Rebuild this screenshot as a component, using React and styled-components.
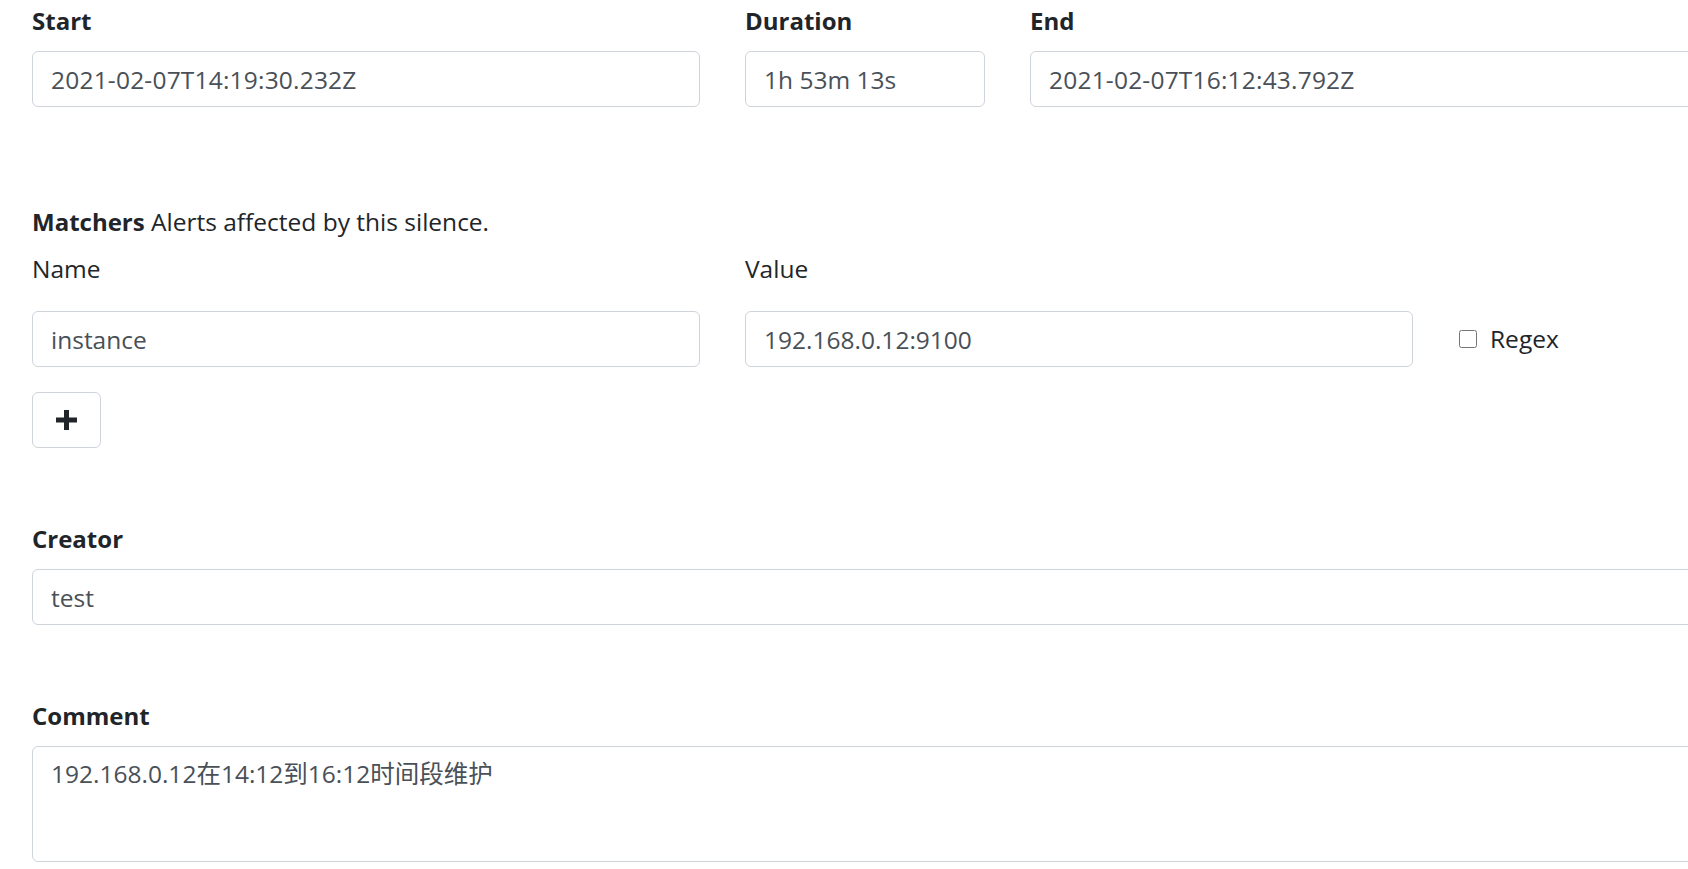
import styled, { createGlobalStyle } from 'styled-components';

const GlobalStyle = createGlobalStyle`
  html, body {
    margin: 0;
    padding: 0;
    background: #fff;
    overflow: hidden;
  }
  body {
    font-family: "Open Sans", "Noto Sans CJK SC", sans-serif;
    font-size: 24.5px;
    line-height: 1.5;
    color: #212529;
  }
`;

const Page = styled.div`
  padding: 3px 0 0 32px;
  width: 1666px;
`;

const Row = styled.div`
  display: grid;
  grid-template-columns: ${props => props.cols};
  column-gap: 45px;
  margin-top: ${props => props.top || 0}px;
`;

const Field = styled.div`
  display: flex;
  flex-direction: column;
  margin-top: ${props => props.top || 0}px;
`;

const Label = styled.label`
  display: block;
  line-height: 36px;
  font-size: ${props => (props.plain ? 24.5 : 24)}px;
  font-weight: ${props => (props.plain ? 400 : 700)};
  margin-bottom: ${props => props.gap || 12}px;
`;

const Hint = styled.div`
  line-height: 36px;
  margin-top: ${props => props.top || 0}px;

  strong {
    font-size: 24px;
    font-weight: 700;
  }
`;

const Input = styled.input`
  box-sizing: border-box;
  width: 100%;
  height: 56px;
  padding: 0 18px;
  border: 1px solid #ced4da;
  border-radius: 6px;
  font: inherit;
  letter-spacing: ${props => (props.wide ? '0.2px' : 'normal')};
  color: #495057;
  background: #fff;
  outline: none;
`;

const TextArea = styled.textarea`
  box-sizing: border-box;
  width: 100%;
  height: 116px;
  padding: 9px 18px;
  border: 1px solid #ced4da;
  border-radius: 6px;
  font: inherit;
  line-height: 36px;
  color: #495057;
  background: #fff;
  outline: none;
  resize: vertical;
`;

const CheckWrap = styled.label`
  display: flex;
  align-items: center;
  height: 56px;
  align-self: end;
  color: #212529;
`;

const Check = styled.input`
  width: 18px;
  height: 18px;
  margin: 0 13px 0 1px;
`;

const AddButton = styled.button`
  display: flex;
  align-items: center;
  justify-content: center;
  width: 69px;
  height: 56px;
  margin-top: 25px;
  padding: 0;
  border: 1px solid #ced4da;
  border-radius: 6px;
  background: #fff;
  cursor: pointer;
`;

const PlusIcon = () => (
  <svg width="21" height="20" viewBox="0 0 21 20">
    <path d="M8 0h5v7.5h8v5h-8V20H8v-7.5H0v-5h8z" fill="#212529" />
  </svg>
);

export default function App() {
  return (
    <>
      <GlobalStyle />
      <Page>
        <Row cols="668px 240px 668px">
          <Field>
            <Label>Start</Label>
            <Input wide defaultValue="2021-02-07T14:19:30.232Z" />
          </Field>
          <Field>
            <Label>Duration</Label>
            <Input defaultValue="1h 53m 13s" />
          </Field>
          <Field>
            <Label>End</Label>
            <Input wide defaultValue="2021-02-07T16:12:43.792Z" />
          </Field>
        </Row>

        <Hint top={97}>
          <strong>Matchers</strong> Alerts affected by this silence.
        </Hint>
        <Row cols="668px 668px 240px" top={11}>
          <Field>
            <Label plain gap={24}>Name</Label>
            <Input defaultValue="instance" />
          </Field>
          <Field>
            <Label plain gap={24}>Value</Label>
            <Input defaultValue="192.168.0.12:9100" />
          </Field>
          <CheckWrap>
            <Check type="checkbox" />
            Regex
          </CheckWrap>
        </Row>
        <AddButton aria-label="Add matcher">
          <PlusIcon />
        </AddButton>

        <Field top={73}>
          <Label>Creator</Label>
          <Input defaultValue="test" />
        </Field>

        <Field top={73}>
          <Label>Comment</Label>
          <TextArea defaultValue="192.168.0.12在14:12到16:12时间段维护" />
        </Field>
      </Page>
    </>
  );
}
